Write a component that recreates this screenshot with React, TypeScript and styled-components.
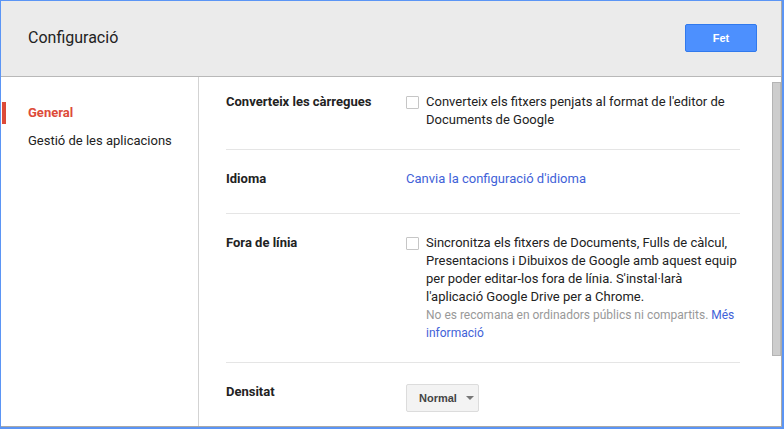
import React from "react";
import styled, { createGlobalStyle } from "styled-components";

const GlobalStyle = createGlobalStyle`
  html, body {
    margin: 0;
    padding: 0;
    overflow: hidden;
  }
  body {
    font-family: Roboto, "Liberation Sans", Arial, sans-serif;
    color: #222;
  }
`;

const Frame = styled.div`
  width: 784px;
  height: 429px;
  box-sizing: border-box;
  border-style: solid;
  border-color: #5b95f5;
  border-width: 1px 2px 2px 1px;
  background: #fff;
  display: flex;
`;

const Dialog = styled.div`
  flex: 1;
  display: flex;
  flex-direction: column;
  border-right: 1px solid #a9a9a9;
  border-bottom: 1px solid #a9a9a9;
  min-width: 0;
`;

const Header = styled.div`
  height: 75px;
  flex: none;
  background: #ebebeb;
  border-bottom: 1px solid #b8b8b8;
  display: flex;
  align-items: center;
  justify-content: space-between;
  padding: 0 24px 0 27px;
`;

const Title = styled.div`
  font-size: 16px;
  color: #222;
  margin-top: -2px;
`;

const DoneButton = styled.button`
  width: 72px;
  height: 28px;
  box-sizing: border-box;
  background: #4d90fe;
  border: 1px solid #3079ed;
  border-radius: 2px;
  color: #fff;
  font-family: Arial, "Liberation Sans", sans-serif;
  font-weight: bold;
  font-size: 11px;
  padding: 0;
  margin-top: -1px;
`;

const Body = styled.div`
  flex: 1;
  display: flex;
  min-height: 0;
`;

const Sidebar = styled.nav`
  width: 198px;
  flex: none;
  box-sizing: border-box;
  border-right: 1px solid #d3d3d3;
  padding: 25px 0 0 1px;
  display: flex;
  flex-direction: column;
  gap: 6px;
`;

const NavItem = styled.div<{ $active?: boolean }>`
  height: 22px;
  line-height: 22px;
  font-size: 13px;
  padding-left: 22px;
  border-left: 4px solid ${(p) => (p.$active ? "#dd4b39" : "transparent")};
  color: ${(p) => (p.$active ? "#dd4b39" : "#222")};
  font-weight: ${(p) => (p.$active ? 700 : 400)};
`;

const Main = styled.div`
  flex: 1;
  position: relative;
  overflow: hidden;
  padding: 0 41px 0 27px;
`;

const Row = styled.div<{ $top?: number; $bottom?: number; $last?: boolean }>`
  display: grid;
  grid-template-columns: 180px 1fr;
  padding: ${(p) => p.$top ?? 20}px 0 ${(p) => p.$bottom ?? 20}px;
  border-bottom: ${(p) => (p.$last ? "none" : "1px solid #e5e5e5")};
  font-size: 13px;
  line-height: 18px;
`;

const Label = styled.div`
  font-weight: 700;
  color: #222;
`;

const Option = styled.label`
  display: flex;
  gap: 7px;
  align-items: flex-start;
`;

const Checkbox = styled.span`
  width: 13px;
  height: 13px;
  flex: none;
  box-sizing: border-box;
  border: 1px solid #c6c6c6;
  border-radius: 1px;
  background: #fff;
  margin-top: 3px;
`;

const Link = styled.a`
  color: #4162d8;
  text-decoration: none;
`;

const Note = styled.div`
  font-size: 12px;
  color: #999;
  line-height: 18px;
`;

const Select = styled.div`
  display: inline-flex;
  align-items: center;
  width: 73px;
  height: 28px;
  box-sizing: border-box;
  border: 1px solid #dcdcdc;
  border-radius: 2px;
  background: #f3f3f3;
  padding-left: 12px;
  margin-top: 1px;
  font-family: Arial, "Liberation Sans", sans-serif;
  font-weight: bold;
  font-size: 11px;
  color: #444;
  gap: 9px;
`;

const Arrow = styled.span`
  width: 0;
  height: 0;
  border-left: 4px solid transparent;
  border-right: 4px solid transparent;
  border-top: 4px solid #777;
`;

const ScrollThumb = styled.div`
  position: absolute;
  right: 0;
  top: 5px;
  width: 9px;
  height: 274px;
  box-sizing: border-box;
  background: #cdcdcd;
  border: 1px solid #b4b4b4;
`;

export default function App() {
  return (
    <>
      <GlobalStyle />
      <Frame>
        <Dialog>
          <Header>
            <Title>Configuració</Title>
            <DoneButton>Fet</DoneButton>
          </Header>
          <Body>
            <Sidebar>
              <NavItem $active>General</NavItem>
              <NavItem>Gestió de les aplicacions</NavItem>
            </Sidebar>
            <Main>
              <Row $top={16}>
                <Label>Converteix les càrregues</Label>
                <Option>
                  <Checkbox />
                  <span>
                    Converteix els fitxers penjats al format de l'editor de
                    Documents de Google
                  </span>
                </Option>
              </Row>
              <Row $bottom={25}>
                <Label>Idioma</Label>
                <div>
                  <Link href="#">Canvia la configuració d'idioma</Link>
                </div>
              </Row>
              <Row>
                <Label>Fora de línia</Label>
                <Option>
                  <Checkbox />
                  <div>
                    <div>
                      Sincronitza els fitxers de Documents, Fulls de càlcul,
                      Presentacions i Dibuixos de Google amb aquest equip per
                      poder editar-los fora de línia. S'instal·larà l'aplicació
                      Google Drive per a Chrome.
                    </div>
                    <Note>
                      No es recomana en ordinadors públics ni compartits.{" "}
                      <Link href="#">Més informació</Link>
                    </Note>
                  </div>
                </Option>
              </Row>
              <Row $last>
                <Label>Densitat</Label>
                <div>
                  <Select>
                    Normal
                    <Arrow />
                  </Select>
                </div>
              </Row>
              <ScrollThumb />
            </Main>
          </Body>
        </Dialog>
      </Frame>
    </>
  );
}
